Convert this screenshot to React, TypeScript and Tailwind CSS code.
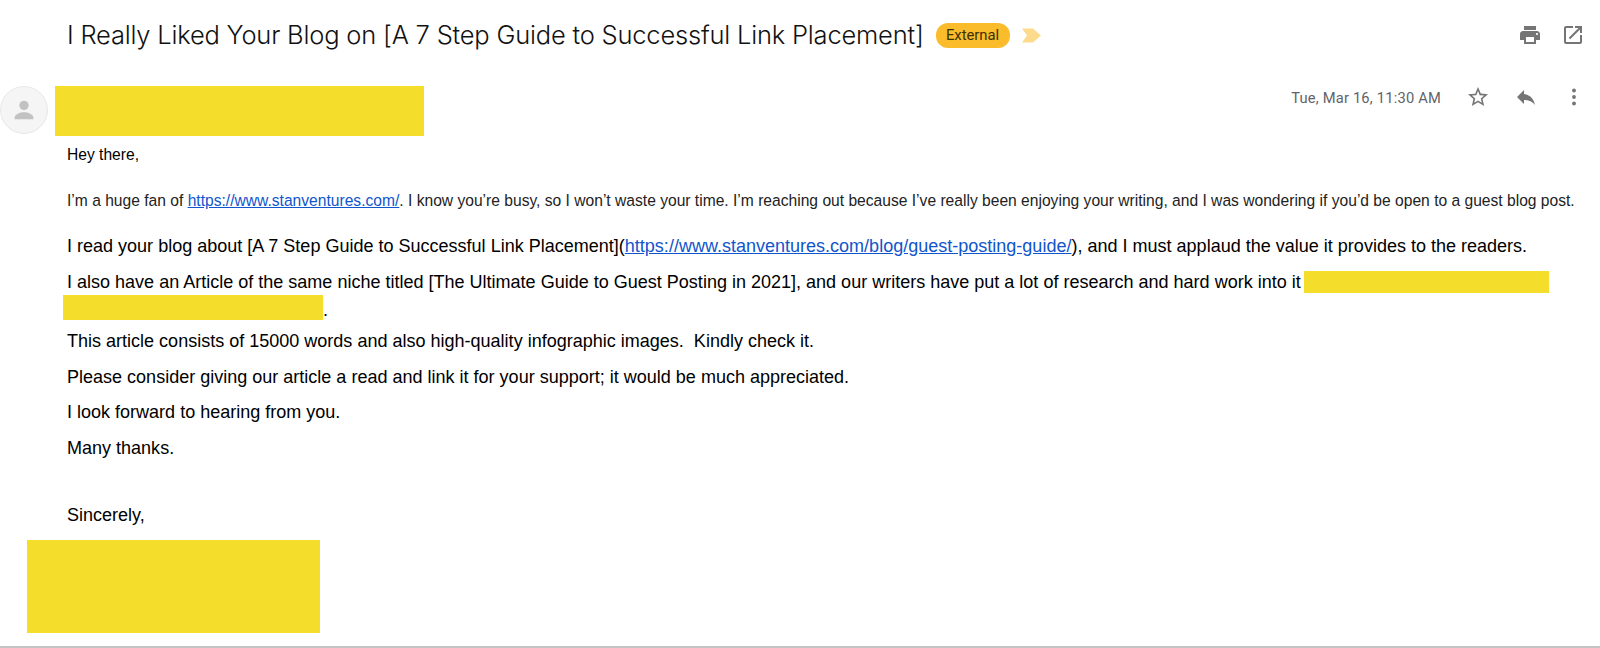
const BODY_LINE_CLASS = 'h-[20px] text-[18.03px] leading-[20px] text-black';

function PrintIcon() {
  return (
    <svg viewBox="0 0 24 24" className="h-[24px] w-[24px] fill-[#757575]">
      <path d="M19 8H5c-1.66 0-3 1.34-3 3v6h4v4h12v-4h4v-6c0-1.66-1.34-3-3-3zm-3 11H8v-5h8v5zm3-7c-.55 0-1-.45-1-1s.45-1 1-1 1 .45 1 1-.45 1-1 1zm-1-9H6v4h12V3z" />
    </svg>
  );
}

function OpenIcon() {
  return (
    <svg viewBox="0 0 24 24" className="h-[24px] w-[24px] fill-[#757575]">
      <path d="M19 19H5V5h7V3H5a2 2 0 0 0-2 2v14a2 2 0 0 0 2 2h14c1.1 0 2-.9 2-2v-7h-2v7zM14 3v2h3.59l-9.83 9.83 1.41 1.41L19 6.41V10h2V3h-7z" />
    </svg>
  );
}

function StarIcon() {
  return (
    <svg viewBox="0 0 24 24" className="h-[24px] w-[24px] fill-[#757575]">
      <path d="M22 9.24l-7.19-.62L12 2 9.19 8.63 2 9.24l5.46 4.73L5.82 21 12 17.27 18.18 21l-1.63-7.03L22 9.24zM12 15.4l-3.76 2.27 1-4.28-3.32-2.88 4.38-.38L12 6.1l1.71 4.04 4.38.38-3.32 2.88 1 4.28L12 15.4z" />
    </svg>
  );
}

function ReplyIcon() {
  return (
    <svg viewBox="0 0 24 24" className="h-[24px] w-[24px] fill-[#757575]">
      <path d="M10 9V5l-7 7 7 7v-4.1c5 0 8.5 1.6 11 5.1-1-5-4-10-11-11z" />
    </svg>
  );
}

function MoreIcon() {
  return (
    <svg viewBox="0 0 24 24" className="h-[24px] w-[24px] fill-[#757575]">
      <circle cx="12" cy="5.5" r="1.9" />
      <circle cx="12" cy="12" r="1.9" />
      <circle cx="12" cy="18.5" r="1.9" />
    </svg>
  );
}

function Avatar() {
  return (
    <div className="mb-[2px] flex h-[48px] w-[48px] items-center justify-center rounded-full border border-[#e8e8e8] bg-[#f5f5f5]">
      <svg viewBox="0 0 24 24" className="h-[28px] w-[28px] fill-[#c2c2c2]">
        <circle cx="12" cy="8" r="4" />
        <path d="M12 14c-3.5 0-8 1.7-8 4.4V20h16v-1.600c0-2.700-4.500-4.400-8-4.400z" />
      </svg>
    </div>
  );
}

export default function App() {
  return (
    <div className="h-[648px] w-[1600px] overflow-hidden border-b-2 border-[#c4c4c4] bg-white font-['Liberation_Sans',sans-serif]">
      <header className="flex h-[70px] items-center pl-[67px] pr-[15px]">
        <h1 className="font-['Inter',sans-serif] text-[25.5px] font-light tracking-[-0.2px] text-[#111]">
          I Really Liked Your Blog on [A 7 Step Guide to Successful Link Placement]
        </h1>
        <span className="ml-[12px] flex h-[25px] w-[74px] items-center justify-center rounded-[12px] bg-[#fbbc2c] font-['Roboto',sans-serif] text-[14.8px] text-[#3c3000]">
          External
        </span>
        <svg viewBox="0 0 20 14" className="ml-[12px] h-[15px] w-[20px] fill-[#fddb8c]">
          <path d="M0 0h11l8 7-8 7H0l5-7z" />
        </svg>
        <div className="ml-auto flex items-center gap-[19px]">
          <PrintIcon />
          <OpenIcon />
        </div>
      </header>

      <div className="mt-[15px] flex h-[51px] items-center">
        <Avatar />
        <div className="ml-[7px] mt-[1px] h-[50px] w-[369px] bg-[#f4de2b]" />
        <div className="ml-auto flex items-center self-start pr-[14px]">
          <span className="mt-[2px] font-['Roboto',sans-serif] text-[14.7px] tracking-[0.2px] text-[#5f6368]">Tue, Mar 16, 11:30 AM</span>
          <div className="ml-[25px]">
            <StarIcon />
          </div>
          <div className="ml-[24px]">
            <ReplyIcon />
          </div>
          <div className="ml-[24px]">
            <MoreIcon />
          </div>
        </div>
      </div>

      <main className="pl-[67px]">
        <p className="mt-[9px] h-[20px] text-[15.62px] leading-[20px] text-black">Hey there,</p>
        <p className="mt-[26px] h-[20px] whitespace-nowrap text-[15.62px] leading-[20px] text-[#222]">
          I’m a huge fan of <a className="text-[#1155cc] underline">https://www.stanventures.com/</a>. I know you’re busy, so I won’t waste your time. I’m reaching out because I’ve really been enjoying your writing, and I was wondering if you’d be open to a guest blog post.
        </p>
        <p className={`mt-[25px] whitespace-nowrap ${BODY_LINE_CLASS}`}>
          I read your blog about [A 7 Step Guide to Successful Link Placement](<a className="text-[#1155cc] underline">https://www.stanventures.com/blog/guest-posting-guide/</a>), and I must applaud the value it provides to the readers.
        </p>
        <p className={`mt-[16px] flex items-center whitespace-nowrap ${BODY_LINE_CLASS}`}>
          I also have an Article of the same niche titled [The Ultimate Guide to Guest Posting in 2021], and our writers have put a lot of research and hard work into it
          <span className="ml-[3px] inline-block h-[22px] w-[245px] bg-[#f4de2b]" />
        </p>
        <div className="-ml-[4px] mt-[3px] flex items-end">
          <span className="h-[25px] w-[260px] bg-[#f4de2b]" />
          <span className="text-[18px] leading-[20px] text-black">.</span>
        </div>
        <p className={`mt-[11px] ${BODY_LINE_CLASS}`}>This article consists of 15000 words and also high-quality infographic images.&nbsp; Kindly check it.</p>
        <p className={`mt-[16px] ${BODY_LINE_CLASS}`}>Please consider giving our article a read and link it for your support; it would be much appreciated.</p>
        <p className={`mt-[15px] ${BODY_LINE_CLASS}`}>I look forward to hearing from you.</p>
        <p className={`mt-[16px] ${BODY_LINE_CLASS}`}>Many thanks.</p>
        <p className={`mt-[47px] ${BODY_LINE_CLASS}`}>Sincerely,</p>
        <div className="-ml-[40px] mt-[15px] h-[93px] w-[293px] bg-[#f4de2b]" />
      </main>
    </div>
  );
}
